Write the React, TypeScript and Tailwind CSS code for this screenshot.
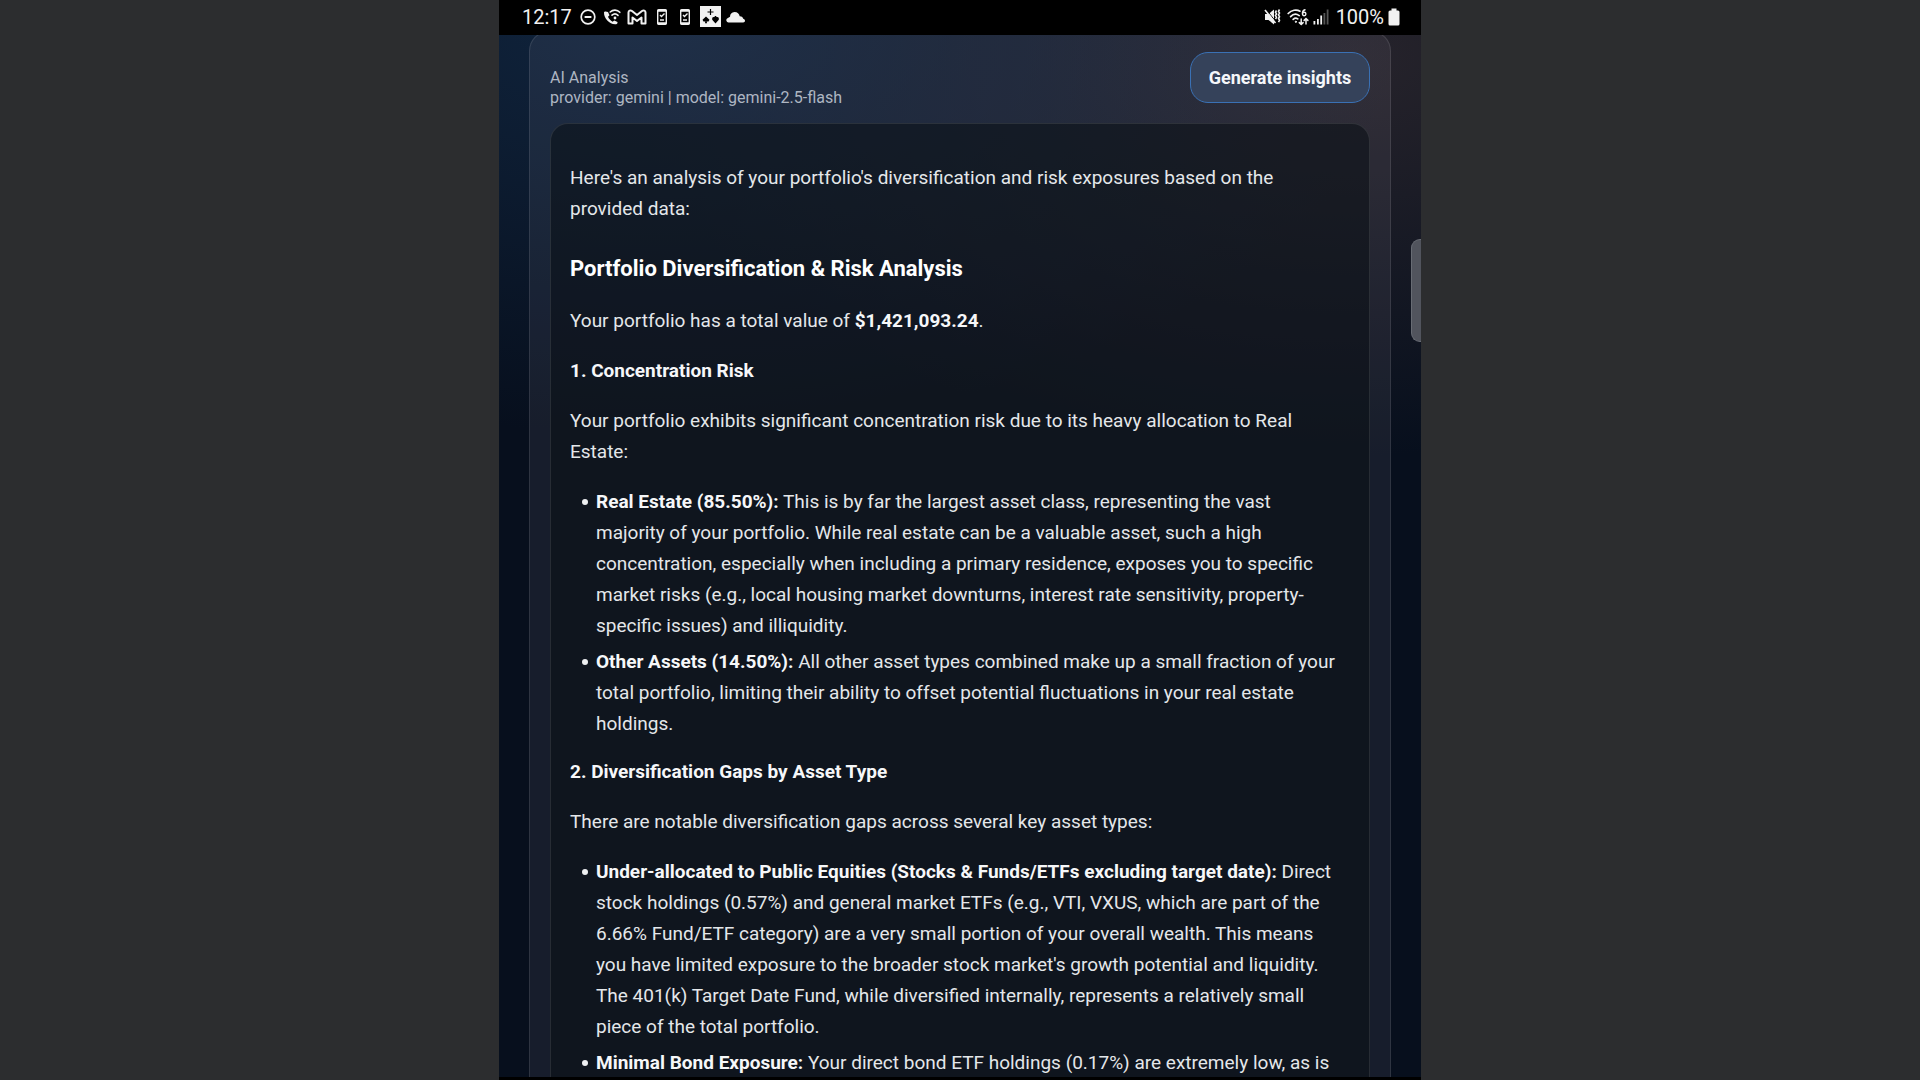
import type { ReactNode } from 'react';

function StatusBar() {
  return (
    <div className="flex h-[35px] shrink-0 items-center justify-between bg-black pb-0.5 pl-[23px] pr-[21px] text-[#f1f1f1]">
      <div className="flex items-center">
        <span className="w-[50px] text-xl leading-8">12:17</span>
        <svg className="ml-[7px] h-[18px] w-[18px]" viewBox="0 0 18 18" fill="none" stroke="currentColor" strokeWidth="1.700">
          <circle cx="9" cy="9" r="6.800" />
          <path d="M5.600 9h6.800" strokeWidth="2" />
        </svg>
        <svg className="ml-1.5 h-[18px] w-[18px]" viewBox="0 0 18 18" fill="currentColor">
          <path d="M1 4.500C.8 10.500 7 17 13 16.300c1.200-.2 1.600-1 1.500-2.300l-3.200-1.600-1.700 1.300C7.600 12.700 5.800 10.800 5 8.800l1.500-1.500L5 4C3 3.200 1.200 3.200 1 4.500z" />
          <g fill="none" stroke="currentColor" strokeWidth="1.600" strokeLinecap="round">
            <path d="M7.200 4c2.800-2.600 7-2.500 9.600.3M9 7.200c1.800-1.600 4.300-1.500 6 .2" />
          </g>
          <circle cx="12" cy="10" r="1.400" />
        </svg>
        <svg className="ml-1.5 h-[18px] w-5" viewBox="0 0 20 18" fill="none" stroke="currentColor" strokeWidth="2" strokeLinejoin="round">
          <path d="M1.500 4.500V15.500H5.500V9.500L10 13L14.500 9.500V15.500H18.500V4.500C18.500 2.500 16.500 2 15 3L10 7L5 3C3.500 2 1.500 2.500 1.500 4.500Z" />
        </svg>
        <DeviceIcon />
        <DeviceIcon />
        <svg className="ml-[7px] h-[21px] w-[21px]" viewBox="0 0 21 21">
          <rect width="21" height="21" fill="#f1f1f1" />
          <g fill="#000">
            <path d="M9.900 3h1.200v2.400h2.400v1.200h-2.400V9H9.900V6.600H7.500V5.400h2.400z" />
            <path d="M6 10.500l3.500 3.200L8.500 15.500H6.600l.5 1.700H4.900l.5-1.700H3.500l-1-1.800z" />
            <path d="M15.500 17.500l-3.300-3.700v-2l1.300-.8h1.200V10h1.600v1h1.200l1.300.8v2z" />
          </g>
        </svg>
        <svg className="ml-[5px] h-3.5 w-5" viewBox="0 0 20 14" fill="currentColor">
          <path d="M2.500 12.500a2.300 2.300 0 0 1-1-4.300L4 6.800A5 5 0 0 1 8.500 2c3 0 4.700 1.800 5.200 4.200C16 6.200 17 7.500 17.200 8.800c1 .2 1.800.8 1.800 2 0 1-.8 1.700-1.800 1.700z" />
        </svg>
      </div>
      <div className="flex items-center">
        <svg className="h-[18px] w-[17px]" viewBox="0 0 17 18" fill="none" stroke="currentColor">
          <path d="M1 6h3.500l5.500-4.500v15L4.500 12H1z" fill="currentColor" stroke="none" />
          <path d="M3 2.500l7.500 9.500" stroke="#000" strokeWidth="1" />
          <path d="M1 2l10.500 13" strokeWidth="1.600" />
          <path d="M12.500 2.500l-1 1.700 1 1.700-1 1.700 1 1.700-1 1.700M15.500 1.500l-1 1.800 1 1.800-1 1.800 1 1.800-1 1.800 1 1.800-1 1.800" strokeWidth="1.600" />
        </svg>
        <svg className="ml-1.5 h-[18px] w-[22px]" viewBox="0 0 22 18" fill="none" stroke="currentColor" strokeWidth="1.700" strokeLinecap="round">
          <path d="M1.200 5.500C4.500 2 9.500 1.200 13 3.200M3.600 8.600c2.500-2.600 6-2.900 8.600-1M6.200 11.400c1.400-1.300 3.200-1.400 4.600-.5" />
          <path d="M18 1.800c-1.800.4-2.600 1.800-2.600 3.700M18.900 6a1.700 1.700 0 1 1-3.400 0 1.700 1.700 0 0 1 3.400 0" strokeWidth="1.400" />
          <path d="M14.200 11v5.500m-1.900-1.900l1.900 1.900 1.900-1.900M19 16v-5.500m-1.900 1.900l1.900-1.900 1.900 1.900" strokeWidth="1.500" />
          <circle cx="8.800" cy="13.800" r=".6" fill="currentColor" strokeWidth="1" />
        </svg>
        <svg className="ml-1 h-[18px] w-4" viewBox="0 0 16 18" fill="currentColor">
          <path d="M.5 13h1.800v3.500H.5zM4 11h1.800v5.500H4zM7.300 7.500h1.800v9H7.300z" />
          <path d="M10.500 5h1.800v11.500h-1.800zM13.700 1.500h1.800v15h-1.800z" opacity=".35" />
        </svg>
        <span className="ml-[7px] text-xl leading-8">100%</span>
        <svg className="ml-1 h-[18px] w-3" viewBox="0 0 12 18" fill="currentColor">
          <path d="M3.500.5h5V2.500H10A1.500 1.500 0 0 1 11.500 4v12A1.500 1.500 0 0 1 10 17.500H2A1.500 1.500 0 0 1 .5 16V4A1.500 1.500 0 0 1 2 2.500h1.500z" />
        </svg>
      </div>
    </div>
  );
}

function DeviceIcon() {
  return (
    <svg className="ml-[7px] h-[18px] w-4" viewBox="0 0 16 18" fill="none" stroke="currentColor">
      <rect x="3.700" y="1.700" width="8.600" height="14.600" rx="1" strokeWidth="1.400" />
      <path d="M3.500 2.700h9M3.500 15.300h9" strokeWidth="2" />
      <path d="M6 7l1.500 1.500L10.500 5.500M6 12h4" strokeWidth="1.400" />
    </svg>
  );
}

function Bullets({ children }: { children: ReactNode }) {
  return <ul className="mt-[19px] flex list-none flex-col gap-[5px] pl-[26px]">{children}</ul>;
}

function Bullet({ title, children }: { title: string; children: ReactNode }) {
  return (
    <li className="relative before:absolute before:-left-[14px] before:top-[13px] before:size-1.5 before:rounded-full before:bg-[#eef0f2] before:content-['']">
      <strong className="font-bold text-[#f6f7f9]">{title}</strong> {children}
    </li>
  );
}

export default function App() {
  return (
    <div className="flex h-screen justify-center overflow-hidden bg-[#2c2d2f] font-[Roboto,sans-serif]">
      <div className="relative flex w-full max-w-[922px] flex-col overflow-hidden border-b-[3px] border-black bg-[#070f1d]">
        <StatusBar />
        <main className="min-h-0 flex-1 overflow-hidden bg-[#070f1d] bg-[radial-gradient(ellipse_760px_420px_at_16%_-2%,#10243d,transparent),radial-gradient(ellipse_720px_400px_at_92%_2%,#26232b,transparent)] px-[30px]">
          <section className="-mt-1 rounded-t-[20px] border border-white/10 bg-[#a89cae]/10 px-5 pt-5">
            <header className="flex items-start justify-between">
              <div className="pt-4 text-base leading-5 text-[#aeb6c2]">
                <h1>AI Analysis</h1>
                <p>provider: gemini | model: gemini-2.5-flash</p>
              </div>
              <button
                type="button"
                className="h-[51px] w-[180px] rounded-[18px] border border-[#3a71b5] bg-[#35425a] text-[18px] font-bold text-[#f5f7fa]"
              >
                Generate insights
              </button>
            </header>
            <article className="mt-[15px] rounded-t-[18px] border border-white/10 bg-[#0a0e14]/55 pl-[19px] pr-[29px] pt-[38px] pb-40 text-[19px] leading-[31px] text-[#e4e7ea]">
              <p>Here's an analysis of your portfolio's diversification and risk exposures based on the provided data:</p>
              <h2 className="mt-[29px] text-[22px] font-bold text-white">Portfolio Diversification &amp; Risk Analysis</h2>
              <p className="mt-[21px]">
                Your portfolio has a total value of <strong className="font-bold text-[#f6f7f9]">$1,421,093.24</strong>.
              </p>
              <h3 className="mt-[19px] font-bold text-[#f6f7f9]">1. Concentration Risk</h3>
              <p className="mt-[19px]">
                Your portfolio exhibits significant concentration risk due to its heavy allocation to Real Estate:
              </p>
              <Bullets>
                <Bullet title="Real Estate (85.50%):">
                  This is by far the largest asset class, representing the vast majority of your portfolio. While real
                  estate can be a valuable asset, such a high concentration, especially when including a primary
                  residence, exposes you to specific market risks (e.g., local housing market downturns, interest rate
                  sensitivity, property-specific issues) and illiquidity.
                </Bullet>
                <Bullet title="Other Assets (14.50%):">
                  All other asset types combined make up a small fraction of your total portfolio, limiting their
                  ability to offset potential fluctuations in your real estate holdings.
                </Bullet>
              </Bullets>
              <h3 className="mt-[17px] font-bold text-[#f6f7f9]">2. Diversification Gaps by Asset Type</h3>
              <p className="mt-[19px]">There are notable diversification gaps across several key asset types:</p>
              <Bullets>
                <Bullet title="Under-allocated to Public Equities (Stocks &amp; Funds/ETFs excluding target date):">
                  Direct stock holdings (0.57%) and general market ETFs (e.g., VTI, VXUS, which are part of the 6.66%
                  Fund/ETF category) are a very small portion of your overall wealth. This means you have limited
                  exposure to the broader stock market's growth potential and liquidity. The 401(k) Target Date Fund,
                  while diversified internally, represents a relatively small piece of the total portfolio.
                </Bullet>
                <Bullet title="Minimal Bond Exposure:">
                  Your direct bond ETF holdings (0.17%) are extremely low, as is
                </Bullet>
              </Bullets>
            </article>
          </section>
        </main>
        <div className="absolute right-0 top-[239px] h-[103px] w-2.5 rounded-l-[9px] border border-r-0 border-[#686c74] bg-[#51545d]" />
      </div>
    </div>
  );
}
